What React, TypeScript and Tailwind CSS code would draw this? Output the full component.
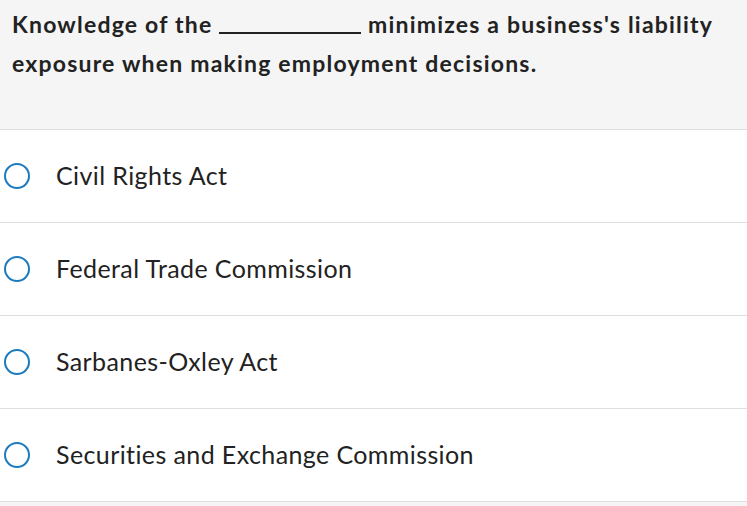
import React from "react";

const options = [
  "Civil Rights Act",
  "Federal Trade Commission",
  "Sarbanes-Oxley Act",
  "Securities and Exchange Commission",
];

export default function App() {
  return (
    <div className="w-[747px] h-[506px] bg-[#f5f5f5] overflow-hidden" style={{ fontFamily: "Lato, 'Open Sans', sans-serif" }}>
      <div className="h-[130px] bg-[#f5f5f5] border-b border-[#dedede] px-[12px] pt-[5px]">
        <p className="text-[23px] leading-[39px] font-bold tracking-[1.2px] text-[#222]">
          Knowledge of the{" "}
          <span className="inline-block w-[142px] border-b-2 border-[#222] align-baseline h-[1px] translate-y-[1px]"></span>{" "}
          minimizes a business's liability exposure when making employment decisions.
        </p>
      </div>
      <div className="bg-white">
        {options.map((o) => (
          <div key={o} className="h-[93px] border-b border-[#dedede] flex items-center">
            <div className="ml-[4px] w-[26px] h-[26px] rounded-full border-[2.5px] border-[#1b7bbd]"></div>
            <span className="ml-[26px] text-[25px] tracking-[0.4px] text-[#222]">{o}</span>
          </div>
        ))}
      </div>
    </div>
  );
}
